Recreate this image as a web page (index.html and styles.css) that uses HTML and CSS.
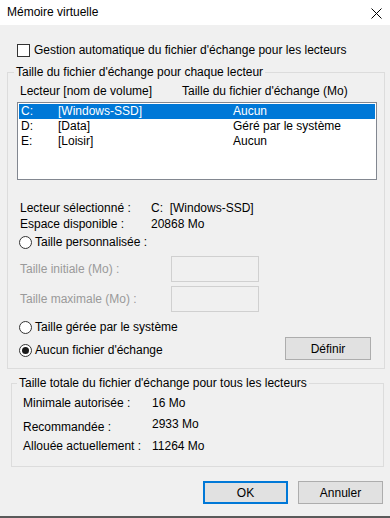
FILE: index.html
```html
<!DOCTYPE html>
<html lang="fr">
<head>
    <meta charset="UTF-8">
    <title>Mémoire virtuelle</title>
    <link rel="stylesheet" href="styles.css">
</head>
<body>
    <div class="window">
        <div class="titlebar">
            <span class="title">Mémoire virtuelle</span>
            <svg class="close" width="11" height="11" viewBox="0 0 11 11">
                <path d="M0.5 0.5 L10.5 10.5 M10.5 0.5 L0.5 10.5" stroke="#000" stroke-width="1" fill="none"/>
            </svg>
        </div>

        <div class="auto">
            <span class="checkbox"></span>
            <span>Gestion automatique du fichier d'échange pour les lecteurs</span>
        </div>

        <fieldset class="group drives">
            <legend>Taille du fichier d'échange pour chaque lecteur</legend>

            <div class="cols">
                <span class="col-drive">Lecteur [nom de volume]</span>
                <span>Taille du fichier d'échange (Mo)</span>
            </div>

            <div class="listbox">
                <div class="drive selected">
                    <span class="letter">C:</span>
                    <span class="label">[Windows-SSD]</span>
                    <span>Aucun</span>
                </div>
                <div class="drive">
                    <span class="letter">D:</span>
                    <span class="label">[Data]</span>
                    <span>Géré par le système</span>
                </div>
                <div class="drive">
                    <span class="letter">E:</span>
                    <span class="label">[Loisir]</span>
                    <span>Aucun</span>
                </div>
            </div>

            <div class="info">
                <span>Lecteur sélectionné :</span>
                <span>C:&nbsp;&nbsp;[Windows-SSD]</span>
                <span>Espace disponible :</span>
                <span>20868 Mo</span>
            </div>

            <div class="option custom">
                <span class="radio"></span>
                <span>Taille personnalisée :</span>
            </div>

            <div class="field first">
                <span>Taille initiale (Mo) :</span>
                <span class="input"></span>
            </div>
            <div class="field">
                <span>Taille maximale (Mo) :</span>
                <span class="input"></span>
            </div>

            <div class="option system">
                <span class="radio"></span>
                <span>Taille gérée par le système</span>
            </div>

            <div class="last-row">
                <div class="option">
                    <span class="radio checked"></span>
                    <span>Aucun fichier d'échange</span>
                </div>
                <button class="btn set">Définir</button>
            </div>
        </fieldset>

        <fieldset class="group totals">
            <legend>Taille totale du fichier d'échange pour tous les lecteurs</legend>
            <div class="total-row">
                <span>Minimale autorisée :</span>
                <span>16 Mo</span>
            </div>
            <div class="total-row second">
                <span>Recommandée :</span>
                <span class="raised">2933 Mo</span>
            </div>
            <div class="total-row third">
                <span>Allouée actuellement :</span>
                <span>11264 Mo</span>
            </div>
        </fieldset>

        <div class="actions">
            <button class="btn default">OK</button>
            <button class="btn">Annuler</button>
        </div>
    </div>
</body>
</html>
```

FILE: styles.css
```css
body {
    margin: 0;
    background: #f0f0f0;
    font-family: 'Liberation Sans', Arial, sans-serif;
    font-size: 12px;
    color: #000;
}

.window {
    width: 390px;
    height: 518px;
    box-sizing: border-box;
    border-bottom: 2px solid #5a5a5a;
    background: #f0f0f0;
}

.titlebar {
    height: 25px;
    background: #fff;
    display: flex;
    align-items: center;
    justify-content: space-between;
    padding: 0 8px 0 7px;
}

.title {
    font-size: 12px;
    line-height: 15px;
}

.close {
    margin-top: 2px;
}

.auto {
    display: flex;
    align-items: center;
    gap: 4px;
    margin: 18px 0 0 17px;
    line-height: 15px;
}

.checkbox {
    width: 13px;
    height: 13px;
    box-sizing: border-box;
    border: 1px solid #333;
    background: #fff;
}

.group {
    margin: 0;
    padding: 0;
    border: 1px solid #dcdcdc;
    min-width: 0;
}

.group legend {
    padding: 0 2px;
    line-height: 15px;
}

.drives {
    margin: 7px 0 0 7px;
    width: 378px;
    box-sizing: border-box;
    padding: 4px 0 8px 0;
}

.drives legend {
    margin-left: 6px;
}

.cols {
    display: flex;
    padding-left: 12px;
    line-height: 15px;
}

.col-drive {
    width: 162px;
}

.listbox {
    margin: 3px 0 0 9px;
    width: 360px;
    height: 78px;
    box-sizing: border-box;
    border: 1px solid #828790;
    background: #fff;
    padding: 1px 1px 0 1px;
}

.drive {
    display: flex;
    height: 15px;
    line-height: 15px;
    padding-left: 2px;
}

.drive.selected {
    background: #0078d7;
    color: #fff;
}

.letter {
    width: 37px;
}

.drive .label {
    width: 175px;
}

.info {
    display: grid;
    grid-template-columns: 131px auto;
    margin-top: 20px;
    padding-left: 12px;
    line-height: 16px;
}

.option {
    display: flex;
    align-items: center;
    gap: 3px;
    line-height: 15px;
    padding-left: 11px;
}

.custom {
    margin-top: 3px;
}

.radio {
    width: 13px;
    height: 13px;
    box-sizing: border-box;
    border: 1px solid #333;
    border-radius: 50%;
    background: #fff;
    display: flex;
    align-items: center;
    justify-content: center;
}

.radio.checked::after {
    content: '';
    width: 7px;
    height: 7px;
    border-radius: 50%;
    background: #1a1a1a;
}

.field {
    display: flex;
    align-items: center;
    padding-left: 12px;
    margin-top: 4px;
    color: #9a9a9a;
}

.field.first {
    margin-top: 6px;
}

.field span:first-child {
    width: 151px;
}

.input {
    width: 88px;
    height: 26px;
    box-sizing: border-box;
    border: 1px solid #d0d0d0;
}

.system {
    margin-top: 8px;
}

.last-row {
    display: flex;
    align-items: center;
    justify-content: space-between;
    margin-top: 2px;
    padding-right: 13px;
}

.last-row .option {
    margin-top: 3px;
}

.btn {
    font-family: inherit;
    font-size: 12px;
    color: #000;
    background: #e1e1e1;
    border: 1px solid #adadad;
    height: 23px;
    padding: 0;
    border-radius: 0;
}

.set {
    width: 86px;
}

.totals {
    margin: 7px 0 0 11px;
    width: 373px;
    box-sizing: border-box;
    padding: 5px 0 12px 0;
}

.totals legend {
    margin-left: 5px;
}

.total-row {
    display: grid;
    grid-template-columns: 129px auto;
    padding-left: 11px;
    line-height: 15px;
}

.total-row.second {
    margin-top: 9px;
}

.total-row.third {
    margin-top: 4px;
}

.raised {
    margin-top: -3px;
}

.actions {
    display: flex;
    justify-content: flex-end;
    gap: 10px;
    margin: 14px 7px 0 0;
}

.actions .btn {
    width: 85px;
}

.btn.default {
    border: 2px solid #0078d7;
}
```
